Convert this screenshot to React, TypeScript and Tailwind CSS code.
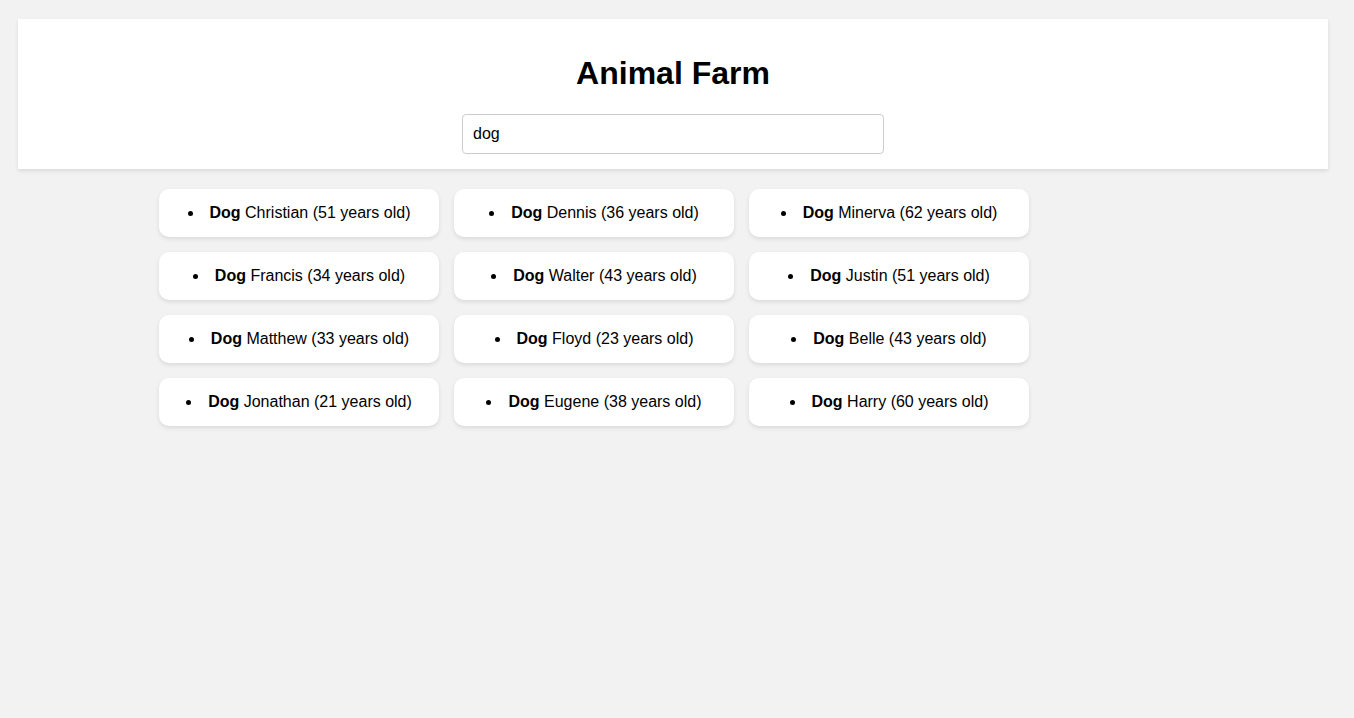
import React from "react";

const animals: [string, number][] = [
  ["Christian", 51],
  ["Dennis", 36],
  ["Minerva", 62],
  ["Francis", 34],
  ["Walter", 43],
  ["Justin", 51],
  ["Matthew", 33],
  ["Floyd", 23],
  ["Belle", 43],
  ["Jonathan", 21],
  ["Eugene", 38],
  ["Harry", 60],
];

export default function App() {
  return (
    <div
      className="min-h-[718px] bg-[#f2f2f2] pt-[19px] text-black"
      style={{ fontFamily: '"Liberation Sans", Arial, sans-serif' }}
    >
      <header className="ml-[18px] flex w-[1310px] flex-col items-center bg-white pt-[36px] pb-[15px] shadow-[0_2px_4px_rgba(0,0,0,0.1)]">
        <h1 className="text-[32px] leading-[37px] font-bold">Animal Farm</h1>
        <input
          defaultValue="dog"
          className="mt-[22px] h-[40px] w-[422px] rounded-[4px] border border-[#cccccc] px-[10px] text-[16px] outline-none"
        />
      </header>
      <ul className="mx-auto mt-[20px] grid w-[1036px] grid-cols-[repeat(3,280px)] gap-[15px]">
        {animals.map(([name, age]) => (
          <li
            key={name}
            className="flex h-[48px] items-center justify-center rounded-[10px] bg-white text-[16px] shadow-[0_2px_4px_rgba(0,0,0,0.1)]"
          >
            <span className="list-item list-inside list-disc text-center">
              <b>Dog</b> {name} ({age} years old)
            </span>
          </li>
        ))}
      </ul>
    </div>
  );
}
